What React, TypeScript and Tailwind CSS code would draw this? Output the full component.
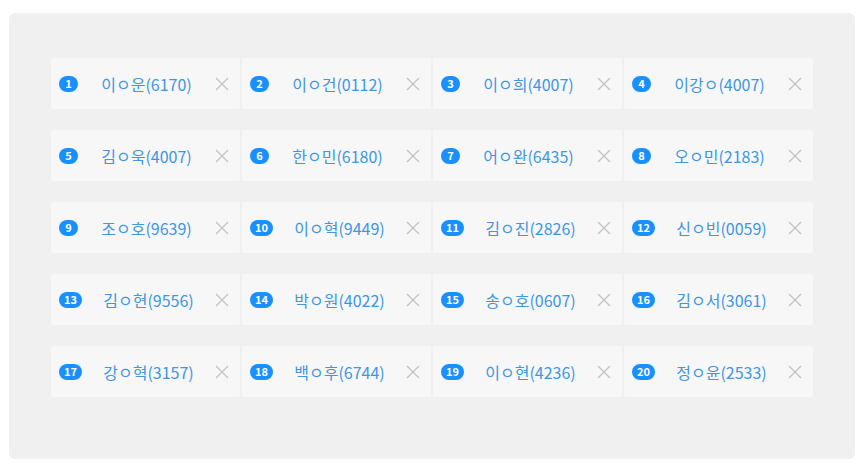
import React from 'react';

const people: string[] = [
	'이ㅇ운(6170)', '이ㅇ건(0112)', '이ㅇ희(4007)', '이강ㅇ(4007)',
	'김ㅇ욱(4007)', '한ㅇ민(6180)', '어ㅇ완(6435)', '오ㅇ민(2183)',
	'조ㅇ호(9639)', '이ㅇ혁(9449)', '김ㅇ진(2826)', '신ㅇ빈(0059)',
	'김ㅇ현(9556)', '박ㅇ원(4022)', '송ㅇ호(0607)', '김ㅇ서(3061)',
	'강ㅇ혁(3157)', '백ㅇ후(6744)', '이ㅇ현(4236)', '정ㅇ윤(2533)'
];

const CloseIcon: React.FC = () => (
	<svg width="14" height="14" viewBox="0 0 14 14" className="shrink-0">
		<path d="M1 1 L13 13 M13 1 L1 13" stroke="#c4c4c4" strokeWidth="1.4" fill="none" />
	</svg>
);

const Tag: React.FC<{ index: number; name: string }> = ({ index, name }) => (
	<div className="flex h-[51px] items-center rounded-[2px] bg-[#f7f7f7] pl-2 pr-[11px]">
		<span className="flex h-4 min-w-[19px] items-center justify-center rounded-full bg-[#1890ff] px-[5px] text-[11px] font-bold leading-none text-white">
			{ index }
		</span>
		<span className="flex-1 text-center text-[16px] leading-none text-[#4096e2]">
			{ name }
		</span>
		<CloseIcon />
	</div>
);

export default function App() {
	return (
		<div
			className="min-h-[464px] bg-white pl-[9px] pr-3 pt-[13px] pb-[5px]"
			style={ { fontFamily: '"Noto Sans CJK KR", "Noto Sans", sans-serif' } }
		>
			<div className="h-[446px] w-[846px] rounded-md bg-[#f0f0f0] pl-[42px] pr-[42px] pt-[45px]">
				<div className="grid grid-cols-4 gap-x-[2px] gap-y-[21px]">
					{ people.map((name, i) => (
						<Tag key={ i } index={ i + 1 } name={ name } />
					)) }
				</div>
			</div>
		</div>
	);
}
